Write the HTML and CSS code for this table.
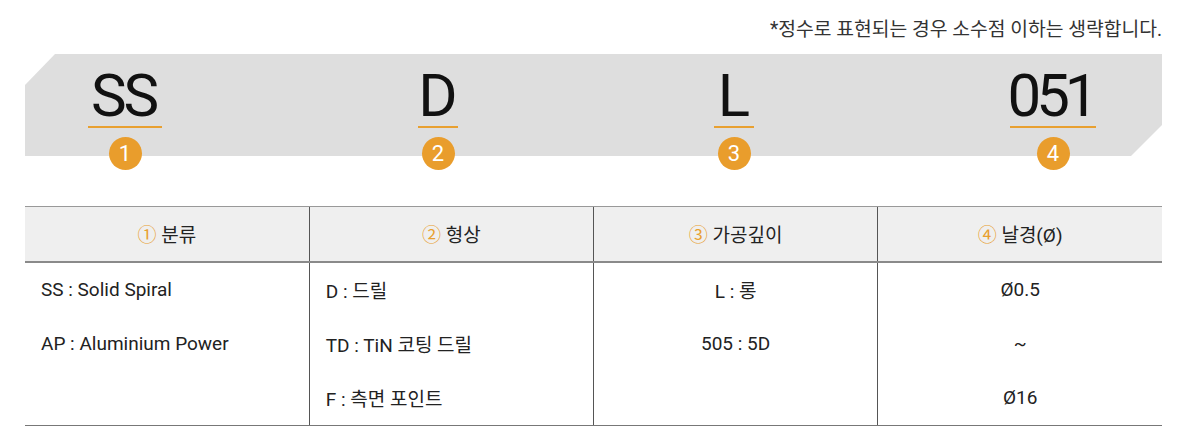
FILE: index.html
```html
<!DOCTYPE html>
<html lang="ko">
<head>
<meta charset="utf-8">
<link rel="stylesheet" href="styles.css">
</head>
<body>
<div class="page">
  <p class="note">*정수로 표현되는 경우 소수점 이하는 생략합니다.</p>
  <div class="band">
    <div class="code c1"><span class="txt">SS</span><span class="num">1</span></div>
    <div class="code c2"><span class="txt">D</span><span class="num">2</span></div>
    <div class="code c3"><span class="txt">L</span><span class="num">3</span></div>
    <div class="code c4"><span class="txt digits">051</span><span class="num">4</span></div>
  </div>
  <table class="spec">
    <thead>
      <tr>
        <th><span class="circ">①</span> 분류</th>
        <th><span class="circ">②</span> 형상</th>
        <th><span class="circ">③</span> 가공깊이</th>
        <th><span class="circ">④</span> 날경(Ø)</th>
      </tr>
    </thead>
    <tbody>
      <tr>
        <td class="left">SS : Solid Spiral</td>
        <td class="left">D : 드릴</td>
        <td>L : 롱</td>
        <td>Ø0.5</td>
      </tr>
      <tr>
        <td class="left">AP : Aluminium Power</td>
        <td class="left">TD : TiN 코팅 드릴</td>
        <td>505 : 5D</td>
        <td>~</td>
      </tr>
      <tr>
        <td class="left"></td>
        <td class="left">F : 측면 포인트</td>
        <td></td>
        <td>Ø16</td>
      </tr>
    </tbody>
  </table>
</div>
</body>
</html>
```

FILE: styles.css
```css
* { box-sizing: border-box; }
html, body { margin: 0; padding: 0; background: #fff; }
body {
  font-family: Roboto, "Noto Sans CJK KR", sans-serif;
  color: #222;
}
.page {
  width: 1200px;
  padding: 0 38px 0 25px;
}
.note {
  margin: 0;
  height: 54px;
  padding-top: 18px;
  text-align: right;
  font-size: 19.3px;
  line-height: 24px;
  color: #333;
}
.band {
  position: relative;
  height: 102px;
  display: flex;
  gap: 256px;
  padding-left: 63px;
}
.band::before {
  content: "";
  position: absolute;
  inset: 0;
  background: #dedede;
  clip-path: polygon(30px 0, 100% 0, 100% 71px, calc(100% - 31px) 100%, 0 100%, 0 31px);
  z-index: 0;
}
.code {
  position: relative;
  z-index: 1;
  display: flex;
  flex-direction: column;
  align-items: center;
}
.c1 { width: 74px; }
.c2, .c3 { width: 40px; }
.c4 { width: 86px; }
.txt {
  display: flex;
  justify-content: center;
  width: 100%;
  font-family: Roboto, sans-serif;
  font-size: 60px;
  line-height: 60px;
  padding-top: 12px;
  height: 74px;
  color: #111;
  border-bottom: 2px solid #e8a030;
  white-space: nowrap;
}
.c1 .txt { letter-spacing: -3px; text-indent: -3px; }
.digits { letter-spacing: -5px; text-indent: -5px; }
.num {
  margin-top: 9px;
  width: 33px;
  height: 33px;
  border-radius: 50%;
  background: #e99d2c;
  color: #fff;
  font-family: Roboto, sans-serif;
  font-size: 22px;
  line-height: 33px;
  text-align: center;
}
.spec {
  margin-top: 50px;
  width: 1137px;
  border-collapse: collapse;
  table-layout: fixed;
  font-size: 19px;
}
.spec th {
  height: 55px;
  background: #efefef;
  font-weight: 400;
  border-top: 1px solid #999;
  border-bottom: 2px solid #8a8a8a;
  border-left: 1px solid #555;
  color: #222;
}
.spec th:first-child, .spec td:first-child { border-left: none; }
.circ { color: #e8a030; }
.spec td {
  height: 54.7px;
  border-left: 1px solid #555;
  text-align: center;
  padding: 0 16px;
  color: #222;
}
.spec td.left { text-align: left; }
.spec tbody tr:last-child td { border-bottom: 1px solid #777; }
```
